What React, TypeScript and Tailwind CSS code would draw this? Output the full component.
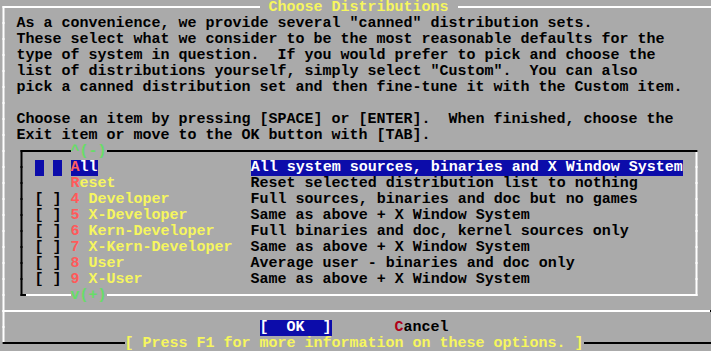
import React from "react";

type BoxProps = { up?: string; down?: string; left?: string; right?: string };

function Box({ up, down, left, right }: BoxProps) {
  return (
    <svg width="9" height="16" className="block shrink-0">
      {up && <rect x="3.5" y="0" width="2" height="8" fill={up} />}
      {down && <rect x="3.5" y="6" width="2" height="10" fill={down} />}
      {left && <rect x="0" y="6" width="5.5" height="2" fill={left} />}
      {right && <rect x="3.5" y="6" width="5.5" height="2" fill={right} />}
    </svg>
  );
}

function HL({ n, white }: { n: number; white?: boolean }) {
  return (
    <div
      className={
        "mb-[2px] h-[2px] shrink-0 overflow-hidden whitespace-pre leading-[2px] " +
        (white ? "bg-white" : "bg-black")
      }
    >
      {" ".repeat(n)}
    </div>
  );
}

function Rest({ white }: { white?: boolean }) {
  return <div className={"mb-[2px] h-[2px] flex-1 " + (white ? "bg-white" : "bg-black")} />;
}

const W = "#ffffff";
const K = "#000000";

function Row({ children }: { children: React.ReactNode }) {
  return <div className="flex h-4 items-center whitespace-pre">{children}</div>;
}

function TextRow({ text }: { text: string }) {
  return (
    <Row>
      <Box up={W} down={W} />
      <span className="text-black">{" " + text}</span>
    </Row>
  );
}

const items = [
  { check: false, sel: true, key: "A", name: "ll", desc: "All system sources, binaries and X Window System" },
  { check: false, sel: false, key: "R", name: "eset", desc: "Reset selected distribution list to nothing" },
  { check: true, sel: false, key: "4", name: " Developer", desc: "Full sources, binaries and doc but no games" },
  { check: true, sel: false, key: "5", name: " X-Developer", desc: "Same as above + X Window System" },
  { check: true, sel: false, key: "6", name: " Kern-Developer", desc: "Full binaries and doc, kernel sources only" },
  { check: true, sel: false, key: "7", name: " X-Kern-Developer", desc: "Same as above + X Window System" },
  { check: true, sel: false, key: "8", name: " User", desc: "Average user - binaries and doc only" },
  { check: true, sel: false, key: "9", name: " X-User", desc: "Same as above + X Window System" },
];

function pad(s: string, n: number) {
  return s + " ".repeat(Math.max(0, n - s.length));
}

export default function App() {
  return (
    <div className="h-[351px] w-[711px] overflow-hidden bg-[#aaaaaa]">
      <div className="-ml-[1.5px] w-[720px] text-[15px] font-bold leading-4 [font-family:'Liberation_Mono',monospace]">
        {/* row 0 */}
        <Row>
          <Box down={W} right={W} />
          <HL n={28} white />
          <span>{" "}</span>
          <span className="text-[#f6f65e]">Choose Distributions</span>
          <span>{" "}</span>
          <Rest white />
        </Row>
        <TextRow text={'As a convenience, we provide several "canned" distribution sets.'} />
        <TextRow text="These select what we consider to be the most reasonable defaults for the" />
        <TextRow text="type of system in question.  If you would prefer to pick and choose the" />
        <TextRow text={'list of distributions yourself, simply select "Custom".  You can also'} />
        <TextRow text="pick a canned distribution set and then fine-tune it with the Custom item." />
        <TextRow text="" />
        <TextRow text="Choose an item by pressing [SPACE] or [ENTER].  When finished, choose the" />
        <TextRow text="Exit item or move to the OK button with [TAB]." />
        {/* row 9: list top border */}
        <Row>
          <Box up={W} down={W} />
          <span>{" "}</span>
          <Box down={K} right={K} />
          <HL n={5} />
          <span className="text-[#66dd66]">^(-)</span>
          <HL n={65} />
          <Box left={K} down={W} />
        </Row>
        {items.map((it, i) => (
          <Row key={i}>
            <Box up={W} down={W} />
            <span>{" "}</span>
            <Box up={K} down={K} />
            <span>{" "}</span>
            {it.sel ? (
              <span className="flex">
                <span className="bg-[#0c0caa]">{" "}</span>
                <span>{" "}</span>
                <span className="bg-[#0c0caa]">{" "}</span>
              </span>
            ) : it.check ? (
              <span className="text-black">[ ]</span>
            ) : (
              <span>{"   "}</span>
            )}
            <span>{" "}</span>
            {it.sel ? (
              <span className="flex">
                <span className="bg-[#0c0caa] text-[#ff6060]">{it.key}</span>
                <span className="bg-[#0c0caa] text-white">{it.name}</span>
                <span>{pad("", 20 - 1 - it.name.length)}</span>
              </span>
            ) : (
              <span className="flex">
                <span className="text-[#ff5a5a]">{it.key}</span>
                <span className="text-[#f6f65e]">{pad(it.name, 19)}</span>
              </span>
            )}
            {it.sel ? (
              <span className="flex">
                <span className="bg-[#0c0caa] text-white">{it.desc}</span>
                <span>{pad("", 49 - it.desc.length)}</span>
              </span>
            ) : (
              <span className="text-black">{pad(it.desc, 49)}</span>
            )}
            <Box up={W} down={W} />
          </Row>
        ))}
        {/* row 18: list bottom border */}
        <Row>
          <Box up={W} down={W} />
          <span>{" "}</span>
          <Box up={K} right={K} />
          <HL n={5} white />
          <span className="text-[#66dd66]">v(+)</span>
          <HL n={65} white />
          <Box left={W} up={W} />
        </Row>
        {/* row 19: separator */}
        <Row>
          <Box up={W} down={W} right={W} />
          <HL n={78} white />
          <Box left={K} up={K} down={K} />
        </Row>
        {/* row 20: buttons */}
        <Row>
          <Box up={W} down={W} />
          <span>{" ".repeat(28)}</span>
          <span className="bg-[#0c0caa] text-white">{"[  OK  ]"}</span>
          <span>{" ".repeat(7)}</span>
          <span className="text-[#b00018]">C</span>
          <span className="text-black">ancel</span>
        </Row>
        {/* row 21: bottom border */}
        <Row>
          <Box up={W} right={K} />
          <HL n={13} />
          <span className="text-[#f6f65e]">[ Press F1 for more information on these options. ]</span>
          <Rest />
        </Row>
      </div>
    </div>
  );
}
